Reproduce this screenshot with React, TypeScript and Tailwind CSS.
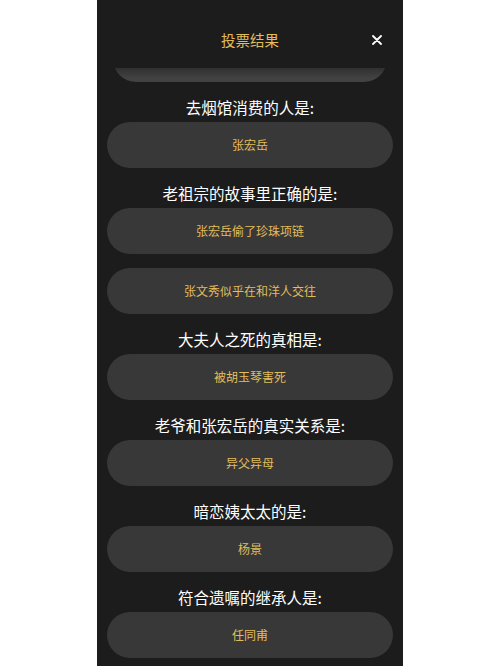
import React from "react";

type Group = { q: string; answers: string[] };

const groups: Group[] = [
  { q: "去烟馆消费的人是:", answers: ["张宏岳"] },
  { q: "老祖宗的故事里正确的是:", answers: ["张宏岳偷了珍珠项链", "张文秀似乎在和洋人交往"] },
  { q: "大夫人之死的真相是:", answers: ["被胡玉琴害死"] },
  { q: "老爷和张宏岳的真实关系是:", answers: ["异父异母"] },
  { q: "暗恋姨太太的是:", answers: ["杨景"] },
  { q: "符合遗嘱的继承人是:", answers: ["任同甫"] },
];

const font = { fontFamily: '"Noto Sans CJK SC", "Noto Sans", sans-serif' };

function Pill({ text }: { text: string }) {
  return (
    <div className="flex h-[46px] w-full items-center justify-center rounded-full bg-[#383838] text-[12px] text-[#e2bd5c]">
      {text}
    </div>
  );
}

export default function App() {
  return (
    <div className="flex h-[666px] w-full justify-center overflow-hidden bg-white" style={font}>
      <div className="flex h-full w-[306px] flex-col bg-[#1c1c1c]">
        <div className="relative flex h-[68px] shrink-0 justify-center pt-[30px]">
          <span className="text-[14.5px] leading-[20px] text-[#e2bd5c]">投票结果</span>
          <button className="absolute right-[21px] top-[35px] flex h-[10px] w-[10px] items-center justify-center">
            <svg width="10" height="10" viewBox="0 0 10 10">
              <path d="M1 1L9 9M9 1L1 9" stroke="#ffffff" strokeWidth="1.8" strokeLinecap="round" />
            </svg>
          </button>
        </div>
        <div className="relative flex-1 overflow-hidden px-[10px]">
          <div className="-mt-[32px] flex flex-col">
            <div className="relative mx-[6px]">
              <div className="h-[46px] w-full rounded-full bg-[#424242]" />
              <div className="absolute inset-x-0 bottom-[4px] top-0 bg-gradient-to-b from-[#1c1c1c] via-[#1c1c1c] to-transparent" />
            </div>
            {groups.map((g) => (
              <div key={g.q} className="flex flex-col">
                <div className="mt-[14px] text-center text-[15.5px] leading-[22px] text-white">{g.q}</div>
                {g.answers.map((a, i) => (
                  <div key={a} className={i === 0 ? "mt-[4px]" : "mt-[14px]"}>
                    <Pill text={a} />
                  </div>
                ))}
              </div>
            ))}
          </div>
        </div>
      </div>
    </div>
  );
}
